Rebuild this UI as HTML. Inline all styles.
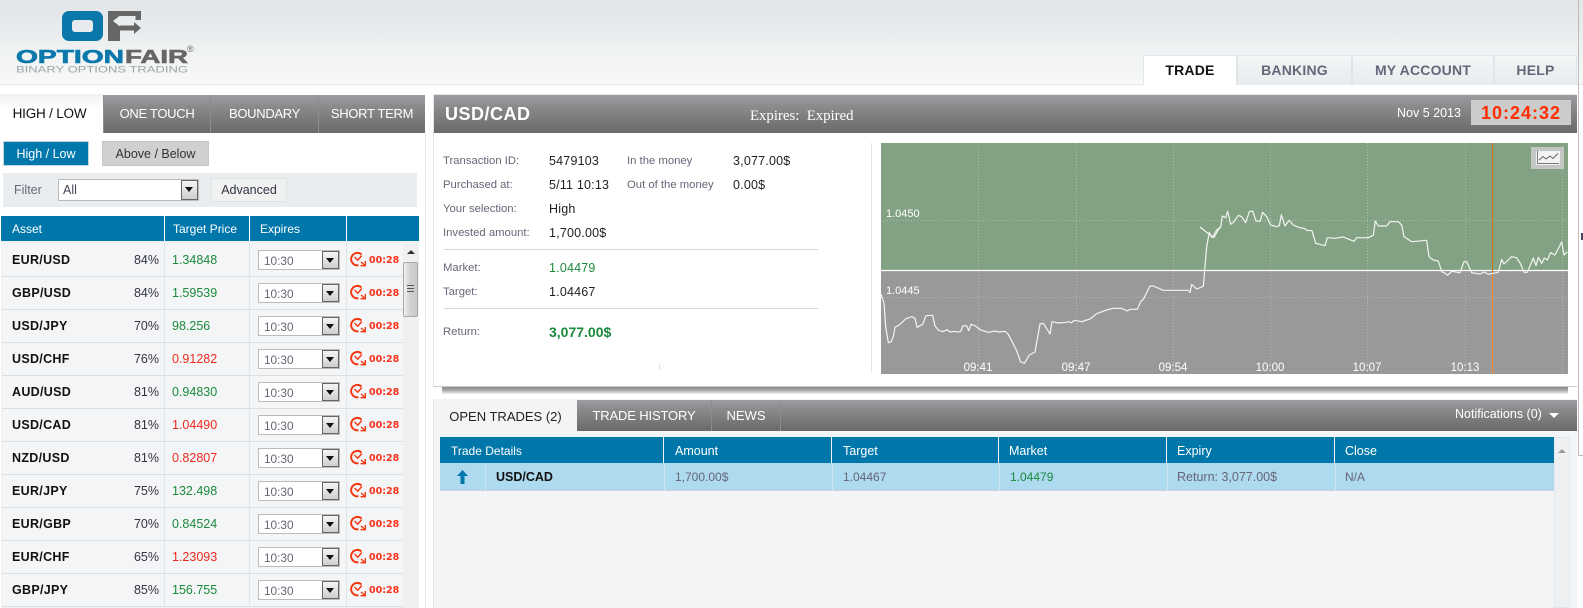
<!DOCTYPE html>
<html><head><meta charset="utf-8"><title>OptionFair</title>
<style>
html,body{margin:0;padding:0;background:#fff;}
body{width:1583px;height:608px;overflow:hidden;position:relative;font-family:"Liberation Sans",sans-serif;font-size:12px;}
div,span{position:absolute;white-space:nowrap;box-sizing:border-box;}
.hdr{left:0;top:0;width:1583px;height:85px;background:linear-gradient(#e1e5e8,#f8f9f9);border-bottom:1px solid #e3e5e6;}
.bar{background:linear-gradient(#9c9da0,#8a8b8d 30%,#68696b);}
.mt{top:55px;height:30px;background:linear-gradient(#f3f5f6,#e8ecee);border:1px solid #e0e5e8;border-bottom:none;color:#66667a;font-weight:bold;font-size:14px;letter-spacing:.2px;line-height:28px;text-align:center;}
.lt{top:95px;height:38px;color:#fff;font-size:13px;letter-spacing:-.3px;line-height:38px;text-align:center;border-left:1px solid #8c8d8f;}
.th{background:#0077aa;color:#fff;height:25px;line-height:27px;top:216px;font-size:12px;}
.r{left:2px;width:401px;height:33px;background:#f4f5f6;border-bottom:1px solid #dcdfe1;line-height:33px;}
.r b{position:absolute;left:10px;top:0;font-size:12.5px;color:#111;letter-spacing:.3px;}
.r i{position:absolute;font-style:normal;}
.p{right:244px;top:0;color:#334;font-size:12.5px;}
.v{left:170px;top:0;font-size:12.5px;}
.g{color:#1b8a3c;}.d{color:#f02a20;}
.c1{position:absolute;left:162px;top:0;width:1px;height:33px;background:#e2e5e7;}
.c2{position:absolute;left:247px;top:0;width:1px;height:33px;background:#e2e5e7;}
.c3{position:absolute;left:344px;top:0;width:1px;height:33px;background:#e2e5e7;}
.sel{left:256px;top:6px;width:82px;height:20px;background:#fff;border:1px solid #bbb;color:#667;font-size:11.8px;line-height:20px;padding-left:5px;}
.ar{right:0;top:0;width:17px;height:18px;background:linear-gradient(#f4f4f4,#cfcfcf);border:1px solid #666;}
.ar:after{content:"";position:absolute;left:3px;top:6px;border:4px solid transparent;border-top:5px solid #111;border-bottom:none;}
.tm{left:367px;top:0;color:#f8321c;font:bold 9.5px/33px "DejaVu Sans",sans-serif;}
.lb{color:#666677;font-size:11.3px;line-height:18px;}
.val{color:#222;font-size:12.5px;letter-spacing:.2px;line-height:18px;}
.tl{top:360px;width:50px;text-align:center;color:#fff;font-size:11.5px;line-height:16px;}
.td{color:#667;font-size:12px;line-height:16px;top:469px;}
</style></head><body>

<div class="hdr"></div>
<svg style="position:absolute;left:0;top:0" width="210" height="85" viewBox="0 0 210 85">
<path fill-rule="evenodd" d="M69 11H96A7 7 0 0 1 103 18V34A7 7 0 0 1 96 41H69A7 7 0 0 1 62 34V18A7 7 0 0 1 69 11ZM75 20A3 3 0 0 0 72 23V29A3 3 0 0 0 75 32H90A3 3 0 0 0 93 29V23A3 3 0 0 0 90 20Z" fill="#0a78ab"/>
<path d="M108 11H141V20H135.500V16H120V41H108Z" fill="#666"/>
<path d="M113 21L120 15.500V18.500H135.500V23.500H120V26.500Z" fill="#e9ecee"/>
<path d="M120 25.500H134V22L141 28L134 34V30.500H120Z" fill="#666"/>
<text x="16" y="63" font-family="Liberation Sans" font-weight="bold" font-size="18" textLength="108" lengthAdjust="spacingAndGlyphs" fill="#0a78ab" stroke="#0a78ab" stroke-width=".6">OPTION</text>
<text x="125" y="63" font-family="Liberation Sans" font-weight="bold" font-size="18" textLength="63" lengthAdjust="spacingAndGlyphs" fill="#666" stroke="#666" stroke-width=".6">FAIR</text>
<text x="16" y="72.500" font-family="Liberation Sans" font-size="9" textLength="172" lengthAdjust="spacingAndGlyphs" fill="#a0a4a7">BINARY OPTIONS TRADING</text>
<text x="187" y="52" font-family="Liberation Sans" font-size="9" fill="#666">®</text>
</svg>

<div class="mt" style="left:1143px;width:94px;background:#fff;color:#111">TRADE</div>
<div class="mt" style="left:1237px;width:115px">BANKING</div>
<div class="mt" style="left:1352px;width:142px">MY ACCOUNT</div>
<div class="mt" style="left:1494px;width:83px">HELP</div>

<!-- left tabs -->
<div style="left:0;top:94px;width:99px;height:39px;background:none;color:#111;font-size:13.500px;letter-spacing:-.2px;line-height:39px;text-align:center;z-index:2">HIGH / LOW</div>
<div style="left:0;top:94px;width:103px;height:39px;background:linear-gradient(#eef1f3,#fff 40%)"></div>
<div class="lt bar" style="left:103px;width:107px">ONE TOUCH</div>
<div class="lt bar" style="left:210px;width:108px">BOUNDARY</div>
<div class="lt bar" style="left:318px;width:107px">SHORT TERM</div>
<div style="left:425px;top:133px;width:1px;height:475px;background:#e6e9eb"></div>

<div style="left:3px;top:141px;width:86px;height:25px;background:#0078ab;border:1px solid #c4d6df;color:#fff;font-size:12.5px;line-height:25px;text-align:center">High / Low</div>
<div style="left:102px;top:141px;width:107px;height:25px;background:#cfd0d0;border:1px solid #c4c6c7;color:#333;font-size:12.5px;line-height:25px;text-align:center">Above / Below</div>

<div style="left:3px;top:173px;width:414px;height:34px;background:#e9edef"></div>
<div style="left:14px;top:182px;color:#667;font-size:12.5px;line-height:16px">Filter</div>
<div style="left:58px;top:179px;width:141px;height:22px;background:#fff;border:1px solid #bbb;color:#445;font-size:12.5px;line-height:20px;padding-left:4px">All<div class="ar" style="height:20px"></div></div>
<div style="left:211px;top:178px;width:76px;height:24px;background:#f0f2f2;border:1px solid #e0e2e3;color:#334;font-size:12.5px;line-height:22px;text-align:center">Advanced</div>

<!-- left table head -->
<div class="th" style="left:1px;width:163px;padding-left:11px">Asset</div>
<div class="th" style="left:165px;width:84px;padding-left:8px">Target Price</div>
<div class="th" style="left:250px;width:96px;padding-left:10px">Expires</div>
<div class="th" style="left:347px;width:72px"></div>

<div style="left:1px;top:241px;width:418px;height:367px;background:#eef0f1"></div>

<div class="r" style="top:244px"><b>EUR/USD</b><i class="p">84%</i><i class="v g">1.34848</i><i class="c1"></i><i class="c2"></i><i class="c3"></i><span class="sel">10:30<span class="ar"></span></span><svg style="position:absolute;left:348px;top:6px" width="17" height="18" viewBox="0 0 17 18"><path d="M11.500 4.500A6.200 6.200 0 1 0 8.500 15.200" fill="none" stroke="#f5350f" stroke-width="1.900"/><path d="M4.500 7L7.800 10.200L11.800 5.500M11 12L15 15.500M10.500 15.700H15.300V11" fill="none" stroke="#f5350f" stroke-width="1.400"/></svg><span class="tm">00:28</span></div>
<div class="r" style="top:277px"><b>GBP/USD</b><i class="p">84%</i><i class="v g">1.59539</i><i class="c1"></i><i class="c2"></i><i class="c3"></i><span class="sel">10:30<span class="ar"></span></span><svg style="position:absolute;left:348px;top:6px" width="17" height="18" viewBox="0 0 17 18"><path d="M11.500 4.500A6.200 6.200 0 1 0 8.500 15.200" fill="none" stroke="#f5350f" stroke-width="1.900"/><path d="M4.500 7L7.800 10.200L11.800 5.500M11 12L15 15.500M10.500 15.700H15.300V11" fill="none" stroke="#f5350f" stroke-width="1.400"/></svg><span class="tm">00:28</span></div>
<div class="r" style="top:310px"><b>USD/JPY</b><i class="p">70%</i><i class="v g">98.256</i><i class="c1"></i><i class="c2"></i><i class="c3"></i><span class="sel">10:30<span class="ar"></span></span><svg style="position:absolute;left:348px;top:6px" width="17" height="18" viewBox="0 0 17 18"><path d="M11.500 4.500A6.200 6.200 0 1 0 8.500 15.200" fill="none" stroke="#f5350f" stroke-width="1.900"/><path d="M4.500 7L7.800 10.200L11.800 5.500M11 12L15 15.500M10.500 15.700H15.300V11" fill="none" stroke="#f5350f" stroke-width="1.400"/></svg><span class="tm">00:28</span></div>
<div class="r" style="top:343px"><b>USD/CHF</b><i class="p">76%</i><i class="v d">0.91282</i><i class="c1"></i><i class="c2"></i><i class="c3"></i><span class="sel">10:30<span class="ar"></span></span><svg style="position:absolute;left:348px;top:6px" width="17" height="18" viewBox="0 0 17 18"><path d="M11.500 4.500A6.200 6.200 0 1 0 8.500 15.200" fill="none" stroke="#f5350f" stroke-width="1.900"/><path d="M4.500 7L7.800 10.200L11.800 5.500M11 12L15 15.500M10.500 15.700H15.300V11" fill="none" stroke="#f5350f" stroke-width="1.400"/></svg><span class="tm">00:28</span></div>
<div class="r" style="top:376px"><b>AUD/USD</b><i class="p">81%</i><i class="v g">0.94830</i><i class="c1"></i><i class="c2"></i><i class="c3"></i><span class="sel">10:30<span class="ar"></span></span><svg style="position:absolute;left:348px;top:6px" width="17" height="18" viewBox="0 0 17 18"><path d="M11.500 4.500A6.200 6.200 0 1 0 8.500 15.200" fill="none" stroke="#f5350f" stroke-width="1.900"/><path d="M4.500 7L7.800 10.200L11.800 5.500M11 12L15 15.500M10.500 15.700H15.300V11" fill="none" stroke="#f5350f" stroke-width="1.400"/></svg><span class="tm">00:28</span></div>
<div class="r" style="top:409px"><b>USD/CAD</b><i class="p">81%</i><i class="v d">1.04490</i><i class="c1"></i><i class="c2"></i><i class="c3"></i><span class="sel">10:30<span class="ar"></span></span><svg style="position:absolute;left:348px;top:6px" width="17" height="18" viewBox="0 0 17 18"><path d="M11.500 4.500A6.200 6.200 0 1 0 8.500 15.200" fill="none" stroke="#f5350f" stroke-width="1.900"/><path d="M4.500 7L7.800 10.200L11.800 5.500M11 12L15 15.500M10.500 15.700H15.300V11" fill="none" stroke="#f5350f" stroke-width="1.400"/></svg><span class="tm">00:28</span></div>
<div class="r" style="top:442px"><b>NZD/USD</b><i class="p">81%</i><i class="v d">0.82807</i><i class="c1"></i><i class="c2"></i><i class="c3"></i><span class="sel">10:30<span class="ar"></span></span><svg style="position:absolute;left:348px;top:6px" width="17" height="18" viewBox="0 0 17 18"><path d="M11.500 4.500A6.200 6.200 0 1 0 8.500 15.200" fill="none" stroke="#f5350f" stroke-width="1.900"/><path d="M4.500 7L7.800 10.200L11.800 5.500M11 12L15 15.500M10.500 15.700H15.300V11" fill="none" stroke="#f5350f" stroke-width="1.400"/></svg><span class="tm">00:28</span></div>
<div class="r" style="top:475px"><b>EUR/JPY</b><i class="p">75%</i><i class="v g">132.498</i><i class="c1"></i><i class="c2"></i><i class="c3"></i><span class="sel">10:30<span class="ar"></span></span><svg style="position:absolute;left:348px;top:6px" width="17" height="18" viewBox="0 0 17 18"><path d="M11.500 4.500A6.200 6.200 0 1 0 8.500 15.200" fill="none" stroke="#f5350f" stroke-width="1.900"/><path d="M4.500 7L7.800 10.200L11.800 5.500M11 12L15 15.500M10.500 15.700H15.300V11" fill="none" stroke="#f5350f" stroke-width="1.400"/></svg><span class="tm">00:28</span></div>
<div class="r" style="top:508px"><b>EUR/GBP</b><i class="p">70%</i><i class="v g">0.84524</i><i class="c1"></i><i class="c2"></i><i class="c3"></i><span class="sel">10:30<span class="ar"></span></span><svg style="position:absolute;left:348px;top:6px" width="17" height="18" viewBox="0 0 17 18"><path d="M11.500 4.500A6.200 6.200 0 1 0 8.500 15.200" fill="none" stroke="#f5350f" stroke-width="1.900"/><path d="M4.500 7L7.800 10.200L11.800 5.500M11 12L15 15.500M10.500 15.700H15.300V11" fill="none" stroke="#f5350f" stroke-width="1.400"/></svg><span class="tm">00:28</span></div>
<div class="r" style="top:541px"><b>EUR/CHF</b><i class="p">65%</i><i class="v d">1.23093</i><i class="c1"></i><i class="c2"></i><i class="c3"></i><span class="sel">10:30<span class="ar"></span></span><svg style="position:absolute;left:348px;top:6px" width="17" height="18" viewBox="0 0 17 18"><path d="M11.500 4.500A6.200 6.200 0 1 0 8.500 15.200" fill="none" stroke="#f5350f" stroke-width="1.900"/><path d="M4.500 7L7.800 10.200L11.800 5.500M11 12L15 15.500M10.500 15.700H15.300V11" fill="none" stroke="#f5350f" stroke-width="1.400"/></svg><span class="tm">00:28</span></div>
<div class="r" style="top:574px"><b>GBP/JPY</b><i class="p">85%</i><i class="v g">156.755</i><i class="c1"></i><i class="c2"></i><i class="c3"></i><span class="sel">10:30<span class="ar"></span></span><svg style="position:absolute;left:348px;top:6px" width="17" height="18" viewBox="0 0 17 18"><path d="M11.500 4.500A6.200 6.200 0 1 0 8.500 15.200" fill="none" stroke="#f5350f" stroke-width="1.900"/><path d="M4.500 7L7.800 10.200L11.800 5.500M11 12L15 15.500M10.500 15.700H15.300V11" fill="none" stroke="#f5350f" stroke-width="1.400"/></svg><span class="tm">00:28</span></div>

<!-- left scrollbar -->
<div style="left:407px;top:250px;border:4px solid transparent;border-bottom:4px solid #333;border-top:none"></div>
<div style="left:403px;top:262px;width:15px;height:55px;background:linear-gradient(90deg,#f0f0f0,#d2d2d2 45%,#c8c8c8);border:1px solid #aaa;border-radius:2px"></div>
<div style="left:407px;top:285px;width:7px;height:7px;border-top:1px solid #555;border-bottom:1px solid #555"></div>
<div style="left:407px;top:288px;width:7px;height:1px;background:#555"></div>

<!-- trade panel -->
<div style="left:442px;top:387px;width:1126px;height:7px;background:linear-gradient(#8c8c8c,#a8a8a8 45%,#f2f2f2);"></div>
<div style="left:433px;top:94px;width:1144px;height:293px;background:#fff;border:1px solid #e2e5e7;border-right:none;border-bottom:1px solid #ccc"></div>
<div class="bar" style="left:434px;top:95px;width:1143px;height:38px"></div>
<div style="left:445px;top:103px;color:#fff;font:bold 18px/23px 'Liberation Sans',sans-serif;letter-spacing:.5px">USD/CAD</div>
<div style="left:750px;top:106px;color:#fff;font:14.8px/20px 'Liberation Serif',serif">Expires:&nbsp; Expired</div>
<div style="left:1397px;top:105px;color:#fff;font-size:12.5px;line-height:16px">Nov 5 2013</div>
<div style="left:1471px;top:100px;width:100px;height:25px;background:#ccc;color:#ff2d00;font:bold 18px/27px 'Liberation Sans',sans-serif;letter-spacing:1px;text-align:center">10:24:32</div>

<div class="lb" style="left:443px;top:152px">Transaction ID:</div><div class="val" style="left:549px;top:152px">5479103</div>
<div class="lb" style="left:627px;top:152px">In the money</div><div class="val" style="left:733px;top:152px">3,077.00$</div>
<div class="lb" style="left:443px;top:176px">Purchased at:</div><div class="val" style="left:549px;top:176px">5/11 10:13</div>
<div class="lb" style="left:627px;top:176px">Out of the money</div><div class="val" style="left:733px;top:176px">0.00$</div>
<div class="lb" style="left:443px;top:200px">Your selection:</div><div class="val" style="left:549px;top:200px">High</div>
<div class="lb" style="left:443px;top:224px">Invested amount:</div><div class="val" style="left:549px;top:224px">1,700.00$</div>
<div style="left:444px;top:249px;width:374px;height:1px;background:#d4d6d8"></div>
<div class="lb" style="left:443px;top:259px">Market:</div><div class="val g" style="left:549px;top:259px;color:#1b8a3c">1.04479</div>
<div class="lb" style="left:443px;top:283px">Target:</div><div class="val" style="left:549px;top:283px">1.04467</div>
<div style="left:444px;top:308px;width:374px;height:1px;background:#d4d6d8"></div>
<div class="lb" style="left:443px;top:323px">Return:</div><div class="val" style="left:549px;top:323px;color:#1b8a3c;font-weight:bold;font-size:14px;letter-spacing:0">3,077.00$</div>
<div style="left:659px;top:364px;width:1px;height:6px;background:#ddd"></div>
<div style="left:871px;top:143px;width:1px;height:229px;background:#dfe5e8"></div>

<!-- chart -->
<div style="left:881px;top:143px;width:687px;height:127px;background:#83a283"></div>
<div style="left:881px;top:270px;width:687px;height:104px;background:#999"></div>
<svg style="position:absolute;left:0;top:0" width="1583" height="608" viewBox="0 0 1583 608">
<g stroke="#b8c4b8" stroke-width="1" stroke-dasharray="1 2" opacity=".8">
<path d="M978.500 143V374M1076.500 143V374M1173.500 143V374M1270.500 143V374M1367.500 143V374M1465.500 143V374M1562.500 143V374M881 220.500H1568M881 297.500H1568"/>
</g>
<path d="M881 270.500H1568" stroke="#fff" stroke-width="1.300"/>
<path d="M1492.500 143V272" stroke="#c47a1e" stroke-width="1.200"/>
<path d="M1492.500 272V374" stroke="#f58a36" stroke-width="1.200"/>
<g transform="translate(870 140) scale(.33333)" fill="none" stroke="#f2f4f2" stroke-width="3.600" stroke-linejoin="round">
<polyline points="33,462 42,490 47,560 55,608 63,606 70,590 75,562 90,553 108,536 125,530 135,535 141,562 158,553 168,527 188,526 195,558 205,570 218,575 232,569 240,576 255,574 262,576 272,575 278,558 290,557 296,572 303,553 315,557 332,570 355,577 375,573 385,576 405,574 415,583 440,632 452,666 463,670 478,645 495,636 510,552 520,550 540,582 546,545 565,549 590,547 597,545 605,549 612,541 635,545 660,537 680,521 710,510 730,505 745,505 755,505 772,513 780,508 802,508 812,485 820,478 840,438 850,438 880,451 955,451 960,458 965,433 980,447 1000,439 1010,320 1018,277 1025,292 1032,292 1050,261"/>
</g>
<g transform="translate(1210 140) scale(.33333)" fill="none" stroke="#f2f4f2" stroke-width="3.600" stroke-linejoin="round">
<polyline points="-30,261 0,285 8,290 20,270 32,262 37,228 47,233 53,214 62,253 72,245 85,226 95,230 107,248 118,215 128,213 138,243 150,244 158,217 170,230 182,255 200,260 208,257 214,224 225,258 237,241 250,255 265,262 285,266 290,271 306,272 317,310 345,317 352,293 375,295 400,291 432,304 440,293 475,293 490,286 496,243 505,258 530,258 540,245 565,245 575,255 582,290 605,305 650,301 657,350 670,360 685,363 695,395 703,398 713,406 725,394 750,398 762,365 770,365 785,398 810,402 822,396 835,403 865,397 875,358 882,372 905,350 920,353 932,372 942,397 952,397 970,354 978,377 985,352 995,370 1003,354 1012,360 1022,338 1035,345 1055,306 1062,345 1072,335"/>
</g>
<rect x="1531" y="147" width="33" height="22" fill="#c4c6c4"/>
<rect x="1536" y="151" width="24" height="14" fill="#f2f3f2"/>
<path d="M1537.500 151V163.500H1559" fill="none" stroke="#777" stroke-width="1"/>
<path d="M1539 160L1543 156.500L1546 159L1550 156L1553 158.500L1558 153.500" fill="none" stroke="#666" stroke-width="1"/>
</svg>
<div style="left:886px;top:206px;color:#fff;font-size:11px;line-height:16px">1.0450</div>
<div style="left:886px;top:283px;color:#fff;font-size:11px;line-height:16px">1.0445</div>
<div class="tl" style="left:953px">09:41</div>
<div class="tl" style="left:1051px">09:47</div>
<div class="tl" style="left:1148px">09:54</div>
<div class="tl" style="left:1245px">10:00</div>
<div class="tl" style="left:1342px">10:07</div>
<div class="tl" style="left:1440px">10:13</div>

<!-- bottom panel -->
<div style="left:433px;top:399px;width:1144px;height:209px;background:#f3f4f6;border-left:1px solid #e2e5e7"></div>
<div class="bar" style="left:434px;top:400px;width:1143px;height:31px"></div>
<div style="left:434px;top:400px;width:143px;height:32px;background:#f3f4f6;color:#222;font-size:13px;line-height:33px;text-align:center">OPEN TRADES (2)</div>
<div style="left:577px;top:400px;width:134px;height:31px;color:#fff;font-size:13px;letter-spacing:-.15px;line-height:32px;text-align:center">TRADE HISTORY</div>
<div style="left:711px;top:400px;width:70px;height:31px;color:#fff;font-size:13px;line-height:32px;text-align:center;border-left:1px solid #8c8d8f;border-right:1px solid #8c8d8f">NEWS</div>
<div style="left:1455px;top:406px;color:#fff;font-size:12.500px;line-height:16px">Notifications (0)</div>
<div style="left:1549px;top:413px;border:5px solid transparent;border-top:5px solid #fff;border-bottom:none"></div>

<div class="th" style="left:440px;top:437px;width:223px;height:26px;line-height:29px;padding-left:11px">Trade Details</div>
<div class="th" style="left:664px;top:437px;width:167px;height:26px;line-height:29px;padding-left:11px;font-size:12.5px">Amount</div>
<div class="th" style="left:832px;top:437px;width:166px;height:26px;line-height:29px;padding-left:11px;font-size:12.5px">Target</div>
<div class="th" style="left:999px;top:437px;width:167px;height:26px;line-height:29px;padding-left:10px;font-size:12.5px">Market</div>
<div class="th" style="left:1167px;top:437px;width:167px;height:26px;line-height:29px;padding-left:10px;font-size:12.5px">Expiry</div>
<div class="th" style="left:1335px;top:437px;width:219px;height:26px;line-height:29px;padding-left:10px;font-size:12.5px">Close</div>
<div style="left:440px;top:463px;width:1114px;height:28px;background:#addaee;border-bottom:1px solid #c9d3d8"></div>
<svg style="position:absolute;left:440px;top:463px" width="40" height="28"><path d="M22.500 7L28 13H24.500V21H20.500V13H17Z" fill="#0077aa"/></svg>
<div style="left:485px;top:463px;width:1px;height:28px;background:#cfe4ef"></div>
<div style="left:664px;top:463px;width:1px;height:28px;background:#cfe4ef"></div>
<div style="left:832px;top:463px;width:1px;height:28px;background:#cfe4ef"></div>
<div style="left:999px;top:463px;width:1px;height:28px;background:#cfe4ef"></div>
<div style="left:1167px;top:463px;width:1px;height:28px;background:#cfe4ef"></div>
<div style="left:1335px;top:463px;width:1px;height:28px;background:#cfe4ef"></div>
<div class="td" style="left:496px;color:#111;font-weight:bold;font-size:12.500px">USD/CAD</div>
<div class="td" style="left:675px">1,700.00$</div>
<div class="td" style="left:843px">1.04467</div>
<div class="td" style="left:1010px;color:#1b8a3c">1.04479</div>
<div class="td" style="left:1177px;font-size:12.500px">Return: 3,077.00$</div>
<div class="td" style="left:1345px">N/A</div>
<div style="left:1554px;top:437px;width:16px;height:171px;background:#eef0f1;border:1px solid #e4e7e9"></div>
<div style="left:1558px;top:449px;border:4px solid transparent;border-bottom:4px solid #999;border-top:none"></div>

<!-- right edge -->
<div style="left:1578px;top:0;width:1px;height:455px;background:#bbb"></div>
<div style="left:1578px;top:455px;width:5px;height:1px;background:#bbb"></div>
<div style="left:1581px;top:233px;width:2px;height:7px;background:#446"></div>
</body></html>
